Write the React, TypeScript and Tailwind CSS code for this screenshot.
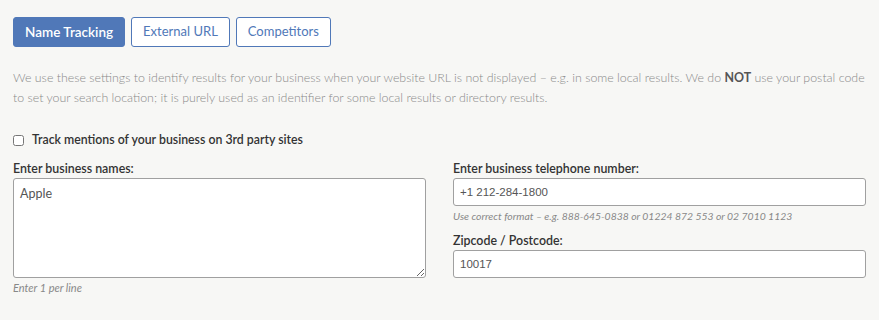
import React from 'react';

const tabs = ['Name Tracking', 'External URL', 'Competitors'];

export default function App() {
  return (
    <div className="min-h-[320px] w-full bg-[#f7f7f5] px-[13px] pt-[17px] font-['Lato',sans-serif] text-[#333]">
      {/* Tabs */}
      <div className="flex gap-[6px]">
        {tabs.map((t, i) => (
          <button
            key={t}
            className={
              i === 0
                ? 'h-[30px] rounded-[3px] border border-[#5078b8] bg-[#5078b8] px-[11px] text-[13.5px] font-semibold text-white'
                : 'h-[30px] rounded-[3px] border border-[#5078b8] bg-white px-[11px] text-[13px] text-[#5078b8]'
            }
          >
            {t}
          </button>
        ))}
      </div>

      {/* Description */}
      <p className="mt-[21px] text-[12.4px] font-light leading-[20px] text-[#8a8a8a]">
        We use these settings to identify results for your business when your website URL is not displayed – e.g. in some local results. We do{' '}
        <b className="font-bold text-[#555]">NOT</b> use your postal code to set your search location; it is purely used as an identifier for some local results or directory results.
      </p>

      {/* Checkbox */}
      <label className="mt-[24px] flex items-center gap-[8px] text-[12.3px] font-semibold leading-[16px] text-[#333]">
        <input type="checkbox" className="h-[11px] w-[11px]" />
        Track mentions of your business on 3rd party sites
      </label>

      <div className="mt-[12px] grid grid-cols-2 gap-[27px]">
        <div>
          <div className="text-[12.4px] font-semibold leading-[18px]">Enter business names:</div>
          <textarea
            defaultValue="Apple"
            className="block h-[100px] w-full rounded-[3px] border border-[#a0a0a0] bg-white px-[6px] py-[6px] text-[12.5px] text-[#555]"
          />
          <div className="mt-[2px] text-[11px] italic leading-[16px] text-[#888]">Enter 1 per line</div>
        </div>
        <div>
          <div className="text-[12.4px] font-semibold leading-[18px]">Enter business telephone number:</div>
          <input
            defaultValue="+1 212-284-1800"
            className="block h-[28px] w-full rounded-[3px] border border-[#a0a0a0] bg-white px-[6px] font-['Liberation_Sans',sans-serif] text-[11.5px] text-[#555]"
          />
          <div className="mt-[2px] text-[10.4px] italic leading-[16px] text-[#888]">
            Use correct format – e.g. 888-645-0838 or 01224 872 553 or 02 7010 1123
          </div>
          <div className="mt-[8px] text-[12.4px] font-semibold leading-[18px]">Zipcode / Postcode:</div>
          <input
            defaultValue="10017"
            className="block h-[28px] w-full rounded-[3px] border border-[#a0a0a0] bg-white px-[6px] font-['Liberation_Sans',sans-serif] text-[11.5px] text-[#555]"
          />
        </div>
      </div>
    </div>
  );
}
